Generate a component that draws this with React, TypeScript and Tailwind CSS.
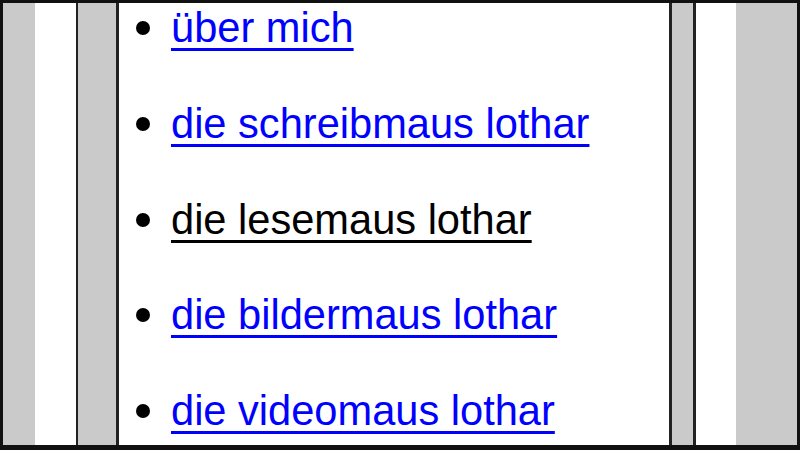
const items = [
  { label: "über mich", current: false },
  { label: "die schreibmaus lothar", current: false },
  { label: "die lesemaus lothar", current: true },
  { label: "die bildermaus lothar", current: false },
  { label: "die videomaus lothar", current: false },
];

const App = () => {
  return (
    <div className="w-[800px] h-[450px] overflow-hidden bg-white border-x-3 border-t-3 border-b-[5px] border-[#111] flex">
      <div className="w-[32px] bg-[#cacaca]" />
      <div className="w-[41px] bg-white" />
      <div className="w-[620px] border-l-2 border-r-3 border-[#222] bg-[#cacaca] flex pl-[38px] pr-[21px]">
        <div className="flex-1 bg-white border-x-3 border-[#222] overflow-hidden">
          <ul
            className="list-disc pl-[52px] flex flex-col gap-[47.75px] text-black marker:text-[46px]"
            style={{ fontFamily: '"Liberation Sans", Arial, sans-serif' }}
          >
            {items.map(item => (
              <li key={item.label} className="text-[41.6px] leading-[47px]">
                <a
                  href="#"
                  className={
                    item.current
                      ? "text-black underline decoration-[3px] underline-offset-[6px]"
                      : "text-[#0000ff] underline decoration-[3px] underline-offset-[6px]"
                  }
                >
                  {item.label}
                </a>
              </li>
            ))}
          </ul>
        </div>
      </div>
      <div className="w-[40px] bg-white" />
      <div className="flex-1 bg-[#cacaca]" />
    </div>
  );
};

export default App;
